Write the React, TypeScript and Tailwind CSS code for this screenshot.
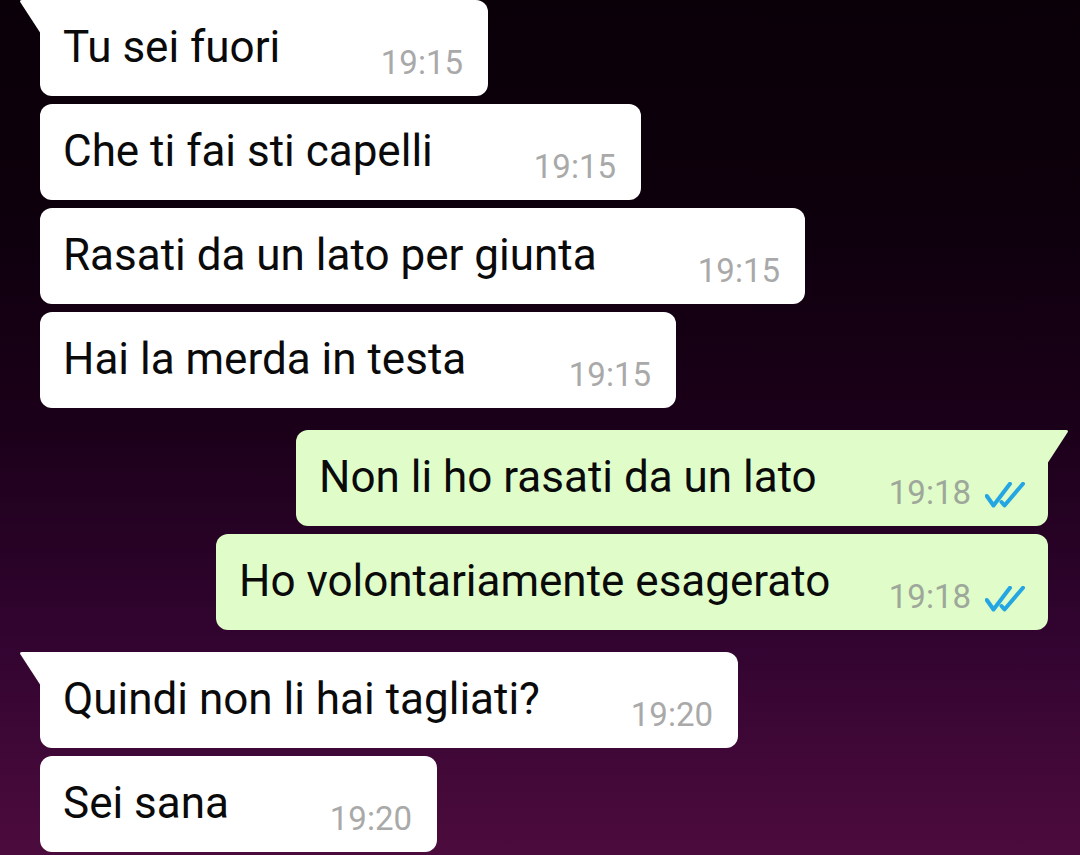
import React from "react";

type Msg = {
  text: string;
  time: string;
  out?: boolean;
  tail?: boolean;
  w: string;
  mt: string;
};

const msgs: Msg[] = [
  { text: "Tu sei fuori", time: "19:15", tail: true, w: "w-[448px]", mt: "mt-0" },
  { text: "Che ti fai sti capelli", time: "19:15", w: "w-[601px]", mt: "mt-[8px]" },
  { text: "Rasati da un lato per giunta", time: "19:15", w: "w-[765px]", mt: "mt-[8px]" },
  { text: "Hai la merda in testa", time: "19:15", w: "w-[636px]", mt: "mt-[8px]" },
  { text: "Non li ho rasati da un lato", time: "19:18", out: true, tail: true, w: "w-[752px]", mt: "mt-[22px]" },
  { text: "Ho volontariamente esagerato", time: "19:18", out: true, w: "w-[832px]", mt: "mt-[8px]" },
  { text: "Quindi non li hai tagliati?", time: "19:20", tail: true, w: "w-[698px]", mt: "mt-[22px]" },
  { text: "Sei sana", time: "19:20", w: "w-[397px]", mt: "mt-[8px]" },
];

function Ticks() {
  return (
    <svg width="40" height="26" viewBox="0 0 40 26" fill="none" className="block">
      <path d="M1.8 14 L8.5 23.5 L25 1.8" stroke="#23a6e2" strokeWidth="4" strokeLinecap="round" strokeLinejoin="round" />
      <path d="M16.5 20 L19.5 23.5 L38 1.8" stroke="#23a6e2" strokeWidth="4" strokeLinecap="round" strokeLinejoin="round" />
    </svg>
  );
}

function Bubble({ m }: { m: Msg }) {
  const bg = m.out ? "bg-[#dffcc9]" : "bg-white";
  let radius = "rounded-[12px]";
  if (m.tail && !m.out) radius = "rounded-[12px] rounded-tl-none";
  if (m.tail && m.out) radius = "rounded-[12px] rounded-tr-none";
  return (
    <div className={`relative flex h-[96px] ${m.w} ${m.mt} ${bg} ${radius} ${m.out ? "self-end" : "self-start"} justify-between pl-[23px] ${m.out ? "pr-[23px]" : "pr-[25px]"}`}>
      {m.tail && !m.out && (
        <svg className="absolute left-[-21px] top-0" width="22" height="34" viewBox="0 0 22 34">
          <path d="M22 0 L3 0 Q0 0 1.5 2.6 L22 34 Z" fill="#ffffff" />
        </svg>
      )}
      {m.tail && m.out && (
        <svg className="absolute right-[-21px] top-0" width="22" height="34" viewBox="0 0 22 34">
          <path d="M0 0 L19 0 Q22 0 20.5 2.6 L0 34 Z" fill="#dffcc9" />
        </svg>
      )}
      <span className="pt-[25px] text-[44px] leading-none text-[#0a0a0a] whitespace-nowrap">{m.text}</span>
      <div className="flex items-end self-end pb-[17px]">
        <span className={`text-[33px] leading-none ${m.out ? "text-[#9ea79a]" : "text-[#a9a9a9]"}`}>{m.time}</span>
        {m.out && (
          <span className="ml-[14px] mb-[1px]">
            <Ticks />
          </span>
        )}
      </div>
    </div>
  );
}

export default function App() {
  return (
    <div
      className="w-[1080px] h-[855px] overflow-hidden bg-[linear-gradient(to_bottom,#0a0008_0%,#0d000c_25%,#1b0019_50%,#320430_75%,#4c0b3d_100%)] flex flex-col pl-[40px] pr-[32px]"
      style={{ fontFamily: "Roboto, 'Noto Sans', sans-serif" }}
    >
      {msgs.map((m, i) => (
        <Bubble key={i} m={m} />
      ))}
    </div>
  );
}
